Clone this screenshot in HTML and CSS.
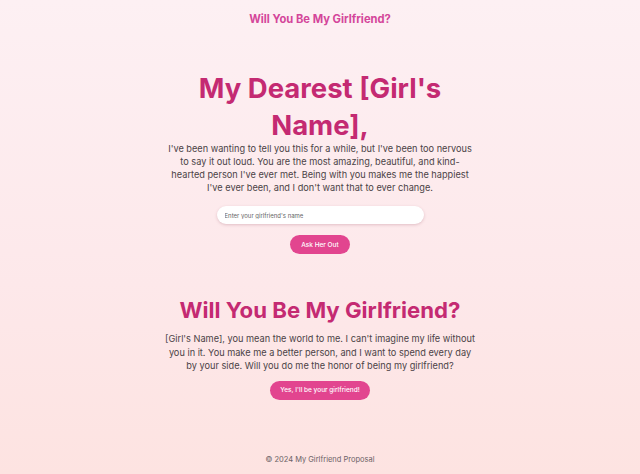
FILE: index.html
```html
<!DOCTYPE html>
<html lang="en">
<head>
<meta charset="utf-8">
<title>Will You Be My Girlfriend?</title>
<link rel="stylesheet" href="styles.css">
</head>
<body>
<div class="page">
  <header class="topbar">
    <span class="brand">Will You Be My Girlfriend?</span>
  </header>
  <main class="main">
    <section class="intro">
      <h1 class="title">My Dearest [Girl's Name],</h1>
      <p class="text">I've been wanting to tell you this for a while, but I've been too nervous to say it out loud. You are the most amazing, beautiful, and kind-hearted person I've ever met. Being with you makes me the happiest I've ever been, and I don't want that to ever change.</p>
      <input class="name-input" type="text" placeholder="Enter your girlfriend's name">
      <button class="btn">Ask Her Out</button>
    </section>
    <section class="ask">
      <h2 class="subtitle">Will You Be My Girlfriend?</h2>
      <p class="text wide">[Girl's Name], you mean the world to me. I can't imagine my life without you in it. You make me a better person, and I want to spend every day by your side. Will you do me the honor of being my girlfriend?</p>
      <button class="btn btn-yes">Yes, I'll be your girlfriend!</button>
    </section>
  </main>
  <footer class="footer">© 2024 My Girlfriend Proposal</footer>
</div>
</body>
</html>
```
FILE: styles.css
```css
* { box-sizing: border-box; }
html, body { margin: 0; padding: 0; }
body {
  font-family: Inter, "Liberation Sans", sans-serif;
  background: linear-gradient(180deg, #fdf0f3 0%, #fde8ea 60%, #fde3e1 100%);
  min-height: 474px;
}
.page {
  display: flex;
  flex-direction: column;
  align-items: center;
  min-height: 474px;
}
.topbar {
  padding-top: 7px;
  height: 30px;
}
.brand {
  font-size: 11.2px;
  font-weight: 700;
  color: #d4469a;
}
.main {
  display: flex;
  flex-direction: column;
  align-items: center;
  flex: 1;
}
.intro {
  margin-top: 40px;
  width: 320px;
  display: flex;
  flex-direction: column;
  align-items: center;
  text-align: center;
}
.title {
  margin: 0 0 -2px;
  font-size: 27.5px;
  line-height: 37px;
  font-weight: 700;
  color: #c42a72;
}
.text {
  margin: 0;
  width: 310px;
  font-size: 9.2px;
  line-height: 13px;
  color: #4b4346;
}
.name-input {
  margin-top: 12px;
  width: 207px;
  height: 18px;
  border: none;
  border-radius: 9px;
  background: #fff;
  box-shadow: 0 1px 3px rgba(160, 90, 110, 0.3);
  padding: 0 8px;
  font-family: inherit;
  font-size: 6px;
  color: #333;
  outline: none;
}
.name-input::placeholder { color: #666; }
.btn {
  margin-top: 11px;
  height: 19px;
  padding: 0 11px;
  border: none;
  border-radius: 10px;
  background: #e2458f;
  color: #fff;
  font-family: inherit;
  font-size: 6.5px;
  font-weight: 500;
}
.ask {
  margin-top: 41px;
  width: 320px;
  display: flex;
  flex-direction: column;
  align-items: center;
  text-align: center;
}
.subtitle {
  margin: 0;
  font-size: 22.2px;
  line-height: 30px;
  font-weight: 700;
  color: #c42a72;
  white-space: nowrap;
}
.text.wide {
  width: 313px;
  margin-top: 7px;
  line-height: 13.5px;
}
.btn-yes {
  margin-top: 8px;
  width: 100px;
  padding: 0;
}
.footer {
  padding-bottom: 10px;
  font-size: 7.5px;
  color: #6b6266;
}
```
